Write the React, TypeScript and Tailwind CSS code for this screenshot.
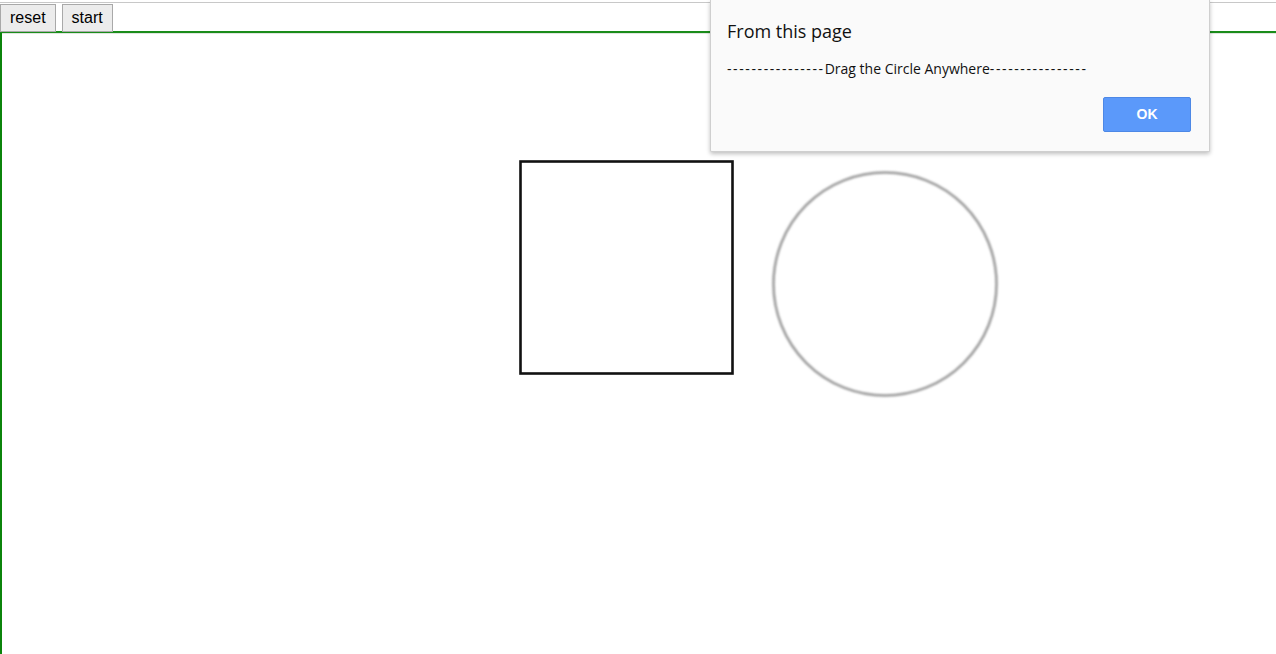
import React from "react";

export default function App() {
  const dashes = "----------------";
  return (
    <div className="relative w-[1276px] h-[654px] overflow-hidden bg-white font-['Liberation_Sans',Arial,sans-serif]">
      <div className="h-[2px]" />
      <div className="flex items-start border-t border-[#c8c8c8] h-[29px]">
        <button className="mt-[1px] h-[28px] px-[9px] bg-[#ececec] border border-[#a9a9a9] text-[16px] leading-none text-black">
          reset
        </button>
        <button className="ml-[6px] mt-[1px] h-[28px] px-[9px] bg-[#ececec] border border-[#a9a9a9] text-[16px] leading-none text-black">
          start
        </button>
      </div>
      <div className="h-[2px] bg-[#1a8c1a]" />
      <div className="relative h-[621px] border-l-2 border-[#0b840b]">
        <div className="h-[1px] bg-[#dfe6df]" />
        <svg className="absolute left-0 top-0" width="1274" height="621">
          <defs>
            <filter id="b" x="-10%" y="-10%" width="120%" height="120%">
              <feGaussianBlur stdDeviation="0.9" />
            </filter>
          </defs>
          <rect x="518.5" y="128.5" width="212" height="212" fill="none" stroke="#111" strokeWidth="2.6" />
          <circle cx="883" cy="251" r="111.5" fill="none" stroke="#9a9a9a" strokeWidth="2.5" filter="url(#b)" />
        </svg>
      </div>

      <div className="absolute left-[710px] top-0 w-[500px] h-[152px] bg-[#fafafa] border border-t-0 border-[#cfcfcf] rounded-b-[2px] shadow-[0_2px_4px_rgba(0,0,0,0.25)] font-['Open_Sans','Noto_Sans',sans-serif]">
        <div className="pl-[16px] pt-[19px] text-[18px] leading-[24px] text-[#111]">From this page</div>
        <div className="pl-[16px] pt-[17px] text-[14px] leading-[18px] text-[#111] whitespace-nowrap">
          <span className="tracking-[1.6px]">{dashes}</span>
          Drag the Circle Anywhere
          <span className="tracking-[1.6px]">{dashes}</span>
        </div>
        <div className="flex justify-end pr-[18px] pt-[19px]">
          <button className="w-[88px] h-[35px] bg-[#5b99fa] border border-[#4d88e6] rounded-[2px] text-white text-[14px] font-bold font-['Liberation_Sans',Arial,sans-serif]">
            OK
          </button>
        </div>
      </div>
    </div>
  );
}
